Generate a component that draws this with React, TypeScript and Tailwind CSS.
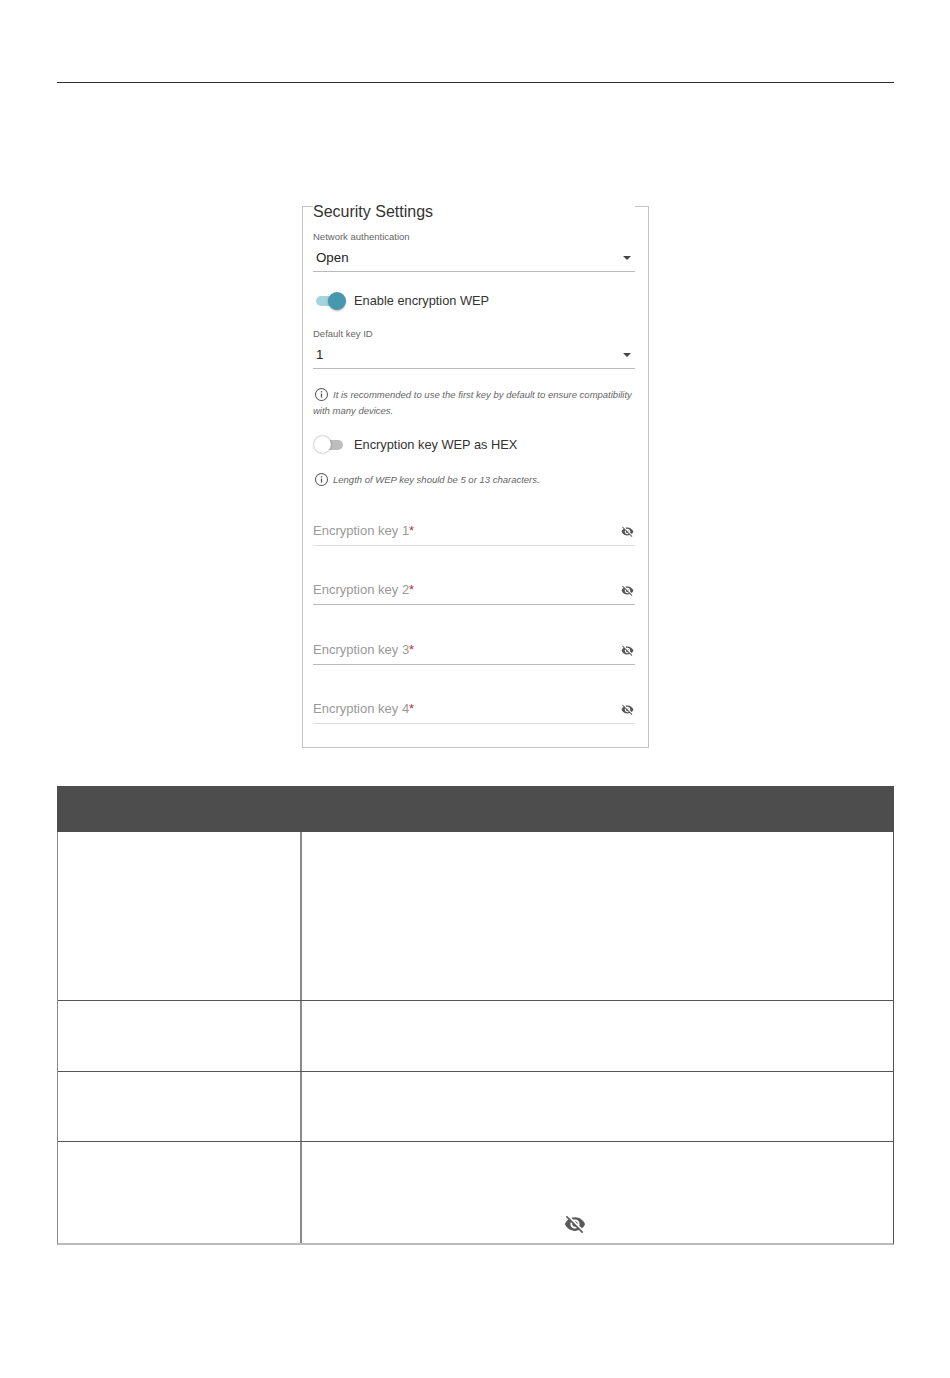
const EYE = "M12 7c2.76 0 5 2.24 5 5 0 .65-.13 1.26-.36 1.83l2.92 2.92c1.51-1.26 2.7-2.89 3.43-4.75-1.73-4.39-6-7.5-11-7.5-1.4 0-2.74.25-3.98.7l2.16 2.16C10.74 7.13 11.35 7 12 7zM2 4.27l2.28 2.28.46.46C3.08 8.3 1.78 10.02 1 12c1.73 4.39 6 7.5 11 7.5 1.55 0 3.03-.3 4.38-.84l.42.42L19.73 22 21 20.73 3.27 3 2 4.27zM7.53 9.8l1.55 1.55c-.05.21-.08.43-.08.65 0 1.66 1.34 3 3 3 .22 0 .44-.03.65-.08l1.55 1.55c-.67.33-1.41.53-2.2.53-2.76 0-5-2.24-5-5 0-.79.2-1.53.53-2.2zm4.31-.78l3.15 3.15.02-.16c0-1.66-1.34-3-3-3l-.17.01z";

function EyeOff({ className }: { className: string }) {
  return (
    <svg viewBox="0 0 24 24" className={className} fill="currentColor">
      <path d={EYE} />
    </svg>
  );
}

function InfoIcon() {
  return (
    <svg viewBox="0 0 16 16" className="inline-block w-[15px] h-[15px] ml-[1px] mr-[4px] align-[-4px] text-[#555]" fill="none" stroke="currentColor">
      <circle cx="8" cy="8" r="6.4" strokeWidth="1.1" />
      <path d="M8 7v4.2" strokeWidth="1.4" />
      <path d="M8 4.4v1.4" strokeWidth="1.4" />
    </svg>
  );
}

function Select({ label, value, mt }: { label: string; value: string; mt: string }) {
  return (
    <div className={mt}>
      <div className="text-[9.5px] leading-[12px] text-[#666]">{label}</div>
      <div className="mt-[6px] h-[23px] border-b border-[#bbb] flex justify-between pl-[3px] pr-[4px] pt-[1px]">
        <span className="text-[13.3px] leading-[16px] text-[#222]">{value}</span>
        <span className="mt-[6px] w-0 h-0 border-x-[4px] border-x-transparent border-t-[4px] border-t-[#444]" />
      </div>
    </div>
  );
}

function KeyField({ n, mt, line }: { n: number; mt: string; line: string }) {
  return (
    <div className={`${mt} h-[24px] border-b ${line} flex justify-between items-start pt-[1px] pr-[1px]`}>
      <span className="text-[13px] leading-[16px] text-[#999]">
        Encryption key {n}<span className="text-[#b5372f]">*</span>
      </span>
      <EyeOff className="w-[13px] h-[13px] mt-[2px] text-[#555]" />
    </div>
  );
}

export default function App() {
  return (
    <div className="w-[950px] h-[1378px] bg-white pt-[82px] px-[57px] font-['Liberation_Sans',Arial,sans-serif]">
      <div className="w-[837px] border-t border-[#333]" />

      <section className="mt-[123px] ml-[245px] w-[347px] h-[542px] border-x border-b border-[#c4c4c4]">
        <div className="flex items-start">
          <div className="w-[10px] border-t border-[#c4c4c4]" />
          <h2 className="w-[322px] text-[16px] leading-[18px] mt-[-3px] text-[#333]">Security Settings</h2>
          <div className="flex-1 border-t border-[#c4c4c4]" />
        </div>

        <div className="pl-[10px] pr-[13px]">
          <Select label="Network authentication" value="Open" mt="mt-[10px]" />

          <div className="mt-[20px] flex items-center h-[18px]">
            <div className="relative w-[30px] h-[18px] ml-[3px]">
              <div className="absolute left-0 top-[4px] w-[26px] h-[10px] rounded-full bg-[#a5d3de]" />
              <div className="absolute right-0 top-0 w-[18px] h-[18px] rounded-full bg-[#4797ad] shadow-[0_1px_2px_rgba(0,0,0,0.3)]" />
            </div>
            <span className="ml-[8px] text-[12.8px] text-[#333]">Enable encryption WEP</span>
          </div>

          <Select label="Default key ID" value="1" mt="mt-[18px]" />

          <p className="mt-[18px] text-[9.5px] leading-[16px] italic text-[#666]">
            <InfoIcon />
            It is recommended to use the first key by default to ensure compatibility with many devices.
          </p>

          <div className="mt-[17px] flex items-center h-[18px]">
            <div className="relative w-[30px] h-[18px] ml-[1px]">
              <div className="absolute left-[2px] top-[4px] w-[27px] h-[10px] rounded-full bg-[#bdbdbd]" />
              <div className="absolute left-0 top-0 w-[17px] h-[17px] rounded-full bg-white shadow-[0_0_2px_rgba(0,0,0,0.5)]" />
            </div>
            <span className="ml-[10px] text-[12.8px] text-[#333]">Encryption key WEP as HEX</span>
          </div>

          <p className="mt-[18px] text-[9.5px] leading-[16px] italic text-[#666]">
            <InfoIcon />
            Length of WEP key should be 5 or 13 characters.
          </p>

          <KeyField n={1} mt="mt-[34px]" line="border-[#ddd]" />
          <KeyField n={2} mt="mt-[35px]" line="border-[#bbb]" />
          <KeyField n={3} mt="mt-[36px]" line="border-[#bbb]" />
          <KeyField n={4} mt="mt-[35px]" line="border-[#ddd]" />
        </div>
      </section>

      <div className="mt-[38px] w-[837px] h-[459px] border-l border-r border-b-2 border-l-[#8a8a8a] border-r-[#555] border-b-[#bbb] flex flex-col">
        <div className="h-[46px] -mx-px bg-[#4d4d4d]" />
        <div className="h-[169px] flex border-b border-[#555]">
          <div className="w-[244px] border-r-2 border-[#8a8a8a]" />
        </div>
        <div className="h-[71px] flex border-b border-[#555]">
          <div className="w-[244px] border-r-2 border-[#8a8a8a]" />
        </div>
        <div className="h-[70px] flex border-b border-[#555]">
          <div className="w-[244px] border-r-2 border-[#8a8a8a]" />
        </div>
        <div className="flex-1 flex">
          <div className="w-[244px] border-r-2 border-[#8a8a8a]" />
          <div className="flex-1 flex items-end pl-[262px] pb-[8px]">
            <EyeOff className="w-[22px] h-[22px] text-[#5a5a5a]" />
          </div>
        </div>
      </div>
    </div>
  );
}
